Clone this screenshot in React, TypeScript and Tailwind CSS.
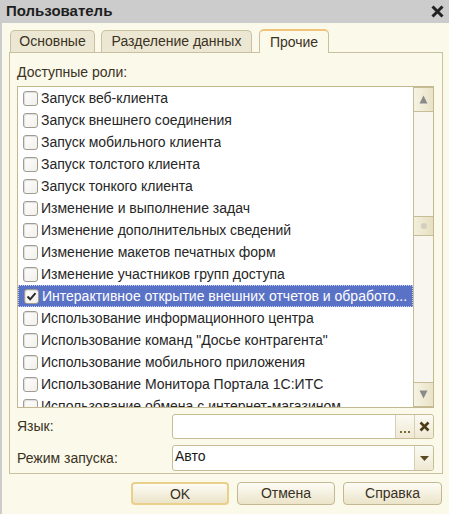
import React from 'react'

const ROLES = [
  'Запуск веб-клиента',
  'Запуск внешнего соединения',
  'Запуск мобильного клиента',
  'Запуск толстого клиента',
  'Запуск тонкого клиента',
  'Изменение и выполнение задач',
  'Изменение дополнительных сведений',
  'Изменение макетов печатных форм',
  'Изменение участников групп доступа',
  'Интерактивное открытие внешних отчетов и обработо...',
  'Использование информационного центра',
  'Использование команд "Досье контрагента"',
  'Использование мобильного приложения',
  'Использование Монитора Портала 1С:ИТС',
  'Использование обмена с интернет-магазином',
]

const SELECTED = 9

function Checkbox({ checked }: { checked?: boolean }) {
  return (
    <span className="w-[15px] h-[15px] shrink-0 rounded-[3px] border border-[#a19c92] bg-gradient-to-br from-[#ffffff] to-[#f1efe9] shadow-[inset_1px_1px_1px_rgba(0,0,0,0.12)] flex items-center justify-center">
      {checked && (
        <svg width="11" height="11" viewBox="0 0 11 11">
          <path d="M1.5 5.5 L4.2 8.3 L9.5 2.2" fill="none" stroke="#2b2b2b" strokeWidth="2" />
        </svg>
      )}
    </span>
  )
}

function ScrollButton({ up }: { up?: boolean }) {
  return (
    <div className="h-[25px] shrink-0 bg-gradient-to-r from-[#f6f3e3] to-[#e9e3c7] border-[#c6bc96] border-y flex items-center justify-center">
      <svg width="9" height="9" viewBox="0 0 9 9">
        {up ? <path d="M4.5 0.5 L8.5 8.5 L0.5 8.5 Z" fill="#8a8a8a" /> : <path d="M0.5 0.5 L8.5 0.5 L4.5 8.5 Z" fill="#8a8a8a" />}
      </svg>
    </div>
  )
}

export default function App() {
  return (
    <div className="w-[449px] h-[514px] bg-[#cccccc] flex flex-col overflow-hidden text-[14px] text-[#2a2a2a]" style={{ fontFamily: '"Liberation Sans", Arial, sans-serif' }}>
      <div className="h-[23px] shrink-0 flex items-center justify-between pl-[6px] pr-[5px]">
        <span className="font-bold text-[15px] text-[#1e1e1e]">Пользователь</span>
        <svg width="13" height="13" viewBox="0 0 13 13">
          <path d="M1.5 1.5 L11.5 11.5 M11.5 1.5 L1.5 11.5" stroke="#222" strokeWidth="3" />
        </svg>
      </div>

      <div className="flex-1 ml-[2px] bg-[#fbf9ea] pl-[7px] pr-[6px] pt-[6px] flex flex-col">
        {/* tabs */}
        <div className="flex items-end h-[23px] pl-[1px] gap-[6px] relative z-10">
          <div className="h-[22px] w-[85px] rounded-t-[5px] border border-b-0 border-[#c9c0a0] bg-[#ece7d3] flex items-center justify-center text-[#3a3223]">Основные</div>
          <div className="h-[22px] w-[151px] rounded-t-[5px] border border-b-0 border-[#c9c0a0] bg-[#ece7d3] flex items-center justify-center text-[#3a3223]">Разделение данных</div>
          <div className="h-[24px] w-[70px] ml-[1px] rounded-t-[5px] border border-b-0 border-[#c9c0a0] border-t-[#f0c47a] border-t-2 bg-[#fbf9ea] flex items-center justify-center text-[#3a3223] translate-y-[1px]">Прочие</div>
        </div>

        {/* panel */}
        <div className="h-[422px] w-[434px] border border-[#c9c0a0] flex flex-col pl-[7px] pr-[8px]">
          <div className="h-[33px] pt-[12px] text-[#3a3223] leading-[15px]">Доступные роли:</div>
          <div className="h-[322px] border border-[#c2b993] bg-white flex">
            <div className="flex-1 overflow-hidden flex flex-col">
              {ROLES.map((r, i) => (
                <div
                  key={r}
                  className={
                    i === SELECTED
                      ? 'h-[22px] shrink-0 flex items-center gap-[3px] pl-[5px] bg-[#5a72c6] text-white border border-dotted border-[#c9d0ee]'
                      : 'h-[22px] shrink-0 flex items-center gap-[3px] pl-[5px] text-[#262626]'
                  }
                >
                  <Checkbox checked={i === SELECTED} />
                  <span className="whitespace-nowrap overflow-hidden">{r}</span>
                </div>
              ))}
            </div>
            <div className="w-[20px] shrink-0 border-l border-[#c6bc96] bg-[#f8f6ee] flex flex-col">
              <ScrollButton up />
              <div className="h-[104px]" />
              <div className="h-[20px] bg-gradient-to-r from-[#f3efda] to-[#e6dfc1] border-y border-[#c6bc96] flex items-center justify-center">
                <span className="w-[6px] h-[6px] rounded-full bg-[#d4cfbc]" />
              </div>
              <div className="flex-1" />
              <ScrollButton />
            </div>
          </div>

          <div className="flex items-center mt-[6px] h-[25px]">
            <span className="w-[155px] text-[#3a3223]">Язык:</span>
            <div className="flex-1 h-[25px] rounded-[3px] border border-[#c6bc96] bg-white flex">
              <div className="flex-1" />
              <div className="w-[19px] border-l border-[#d6cfb3] bg-gradient-to-b from-[#fbfaf3] to-[#efe9d3] flex items-end justify-center pb-[5px] gap-[2px]">
                <span className="w-[2px] h-[2px] bg-[#7a6a3a]" />
                <span className="w-[2px] h-[2px] bg-[#7a6a3a]" />
                <span className="w-[2px] h-[2px] bg-[#7a6a3a]" />
              </div>
              <div className="w-[19px] border-l border-[#d6cfb3] bg-gradient-to-b from-[#fbfaf3] to-[#efe9d3] flex items-center justify-center rounded-r-[3px]">
                <svg width="11" height="11" viewBox="0 0 11 11">
                  <path d="M1.5 1.5 L9.5 9.5 M9.5 1.5 L1.5 9.5" stroke="#4d3d17" strokeWidth="2.6" />
                </svg>
              </div>
            </div>
          </div>

          <div className="flex items-center mt-[6px] h-[26px]">
            <span className="w-[155px] text-[#3a3223]">Режим запуска:</span>
            <div className="flex-1 h-[26px] rounded-[3px] border border-[#c6bc96] bg-white flex">
              <div className="flex-1 pl-[2px] flex items-center pb-[3px] text-[#1a1a1a]">Авто</div>
              <div className="w-[19px] border-l border-[#d6cfb3] bg-gradient-to-b from-[#fbfaf3] to-[#efe9d3] flex items-center justify-center rounded-r-[3px]">
                <svg width="9" height="5" viewBox="0 0 9 5">
                  <path d="M0 0 L9 0 L4.5 5 Z" fill="#5a4a22" />
                </svg>
              </div>
            </div>
          </div>
        </div>

        {/* buttons */}
        <div className="flex justify-end gap-[8px] mt-[8px] pr-[1px]">
          <button className="w-[98px] h-[23px] rounded-[4px] border-2 border-[#ead08a] bg-gradient-to-b from-[#fdfcf6] to-[#ebe4c9] text-[#3a3223]">OK</button>
          <button className="w-[98px] h-[23px] rounded-[4px] border border-[#c3b892] bg-gradient-to-b from-[#fdfcf6] to-[#ebe4c9] text-[#3a3223]">Отмена</button>
          <button className="w-[99px] h-[23px] rounded-[4px] border border-[#c3b892] bg-gradient-to-b from-[#fdfcf6] to-[#ebe4c9] text-[#3a3223]">Справка</button>
        </div>
      </div>
    </div>
  )
}
